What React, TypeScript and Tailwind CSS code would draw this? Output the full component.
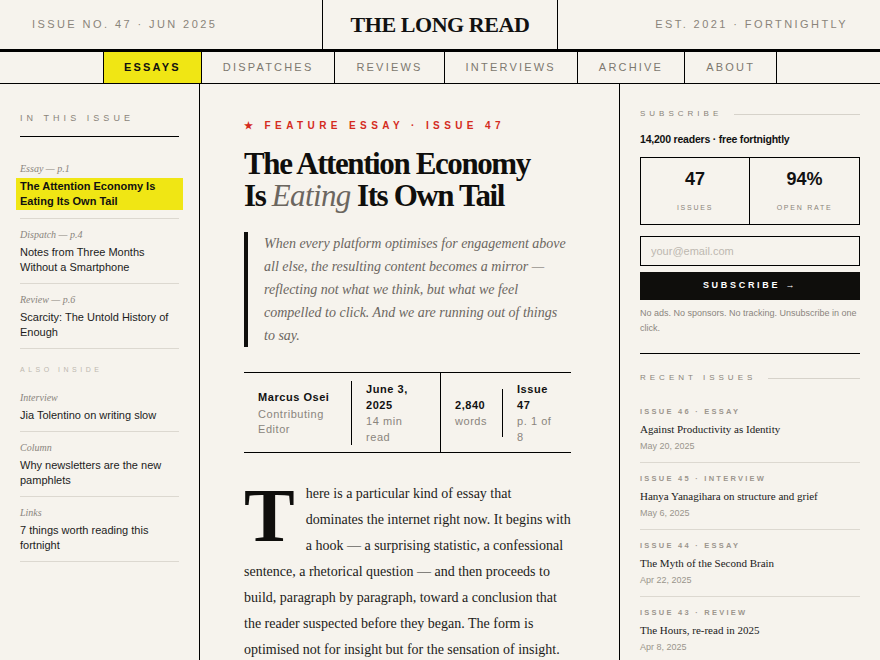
import React from "react";

const sans = { fontFamily: '"Liberation Sans", Arial, sans-serif' };
const serif = { fontFamily: '"Liberation Serif", "Times New Roman", serif' };

function SideItem({ label, title, hl }: { label: string; title: React.ReactNode; hl?: boolean }) {
  return (
    <div className="pt-[10px] pb-[8px] border-b border-[#dcd8d0]">
      <div className="text-[10px] leading-[12px] italic text-[#8a857d]" style={serif}>
        {label}
      </div>
      {hl ? (
        <div className="mt-[3px] -mx-1 px-1 py-px bg-[#f0e614] text-[11px] leading-[15px] font-bold text-[#111]">
          {title}
        </div>
      ) : (
        <div className="mt-[4px] text-[11px] leading-[15px] text-[#1c1c1c]">{title}</div>
      )}
    </div>
  );
}

function RecentItem({ label, title, date }: { label: string; title: string; date: string }) {
  return (
    <div className="pt-[10px] pb-[10px] border-b border-[#dcd8d0]">
      <div className="text-[7.5px] leading-[12px] tracking-[0.3em] font-bold text-[#9c968d]">{label}</div>
      <div className="mt-[4px] text-[11px] leading-[14px] text-[#1a1a1a]" style={serif}>
        {title}
      </div>
      <div className="mt-[4px] text-[9px] leading-[12px] text-[#9a958c]">{date}</div>
    </div>
  );
}

export default function App() {
  const nav = ["ESSAYS", "DISPATCHES", "REVIEWS", "INTERVIEWS", "ARCHIVE", "ABOUT"];
  return (
    <div className="min-h-screen bg-[#f6f3ed] text-[#111]" style={sans}>
      {/* Masthead */}
      <header className="grid grid-cols-[1fr_auto_1fr] h-[52px] border-b-[3px] border-black">
        <div className="flex items-center pl-8 text-[11px] tracking-[0.22em] text-[#8a847a]">
          ISSUE NO. 47 · JUN 2025
        </div>
        <div className="flex items-center justify-center border-x border-black px-[28px]">
          <span className="text-[22px] font-bold tracking-[-0.02em] text-[#111]" style={serif}>
            THE LONG READ
          </span>
        </div>
        <div className="flex items-center justify-end pr-8 text-[11px] tracking-[0.22em] text-[#8a847a]">
          EST. 2021 · FORTNIGHTLY
        </div>
      </header>

      {/* Nav */}
      <nav className="flex justify-center border-b border-black">
        {nav.map((n, i) => (
          <div
            key={n}
            className={
              i === 0
                ? "h-[31px] flex items-center px-5 border-x border-black bg-[#f0e614] text-[11px] tracking-[0.2em] font-bold text-[#111]"
                : "h-[31px] flex items-center px-[21px] border-r border-black text-[11px] tracking-[0.2em] text-[#7d786f]"
            }
          >
            {n}
          </div>
        ))}
      </nav>

      {/* Body */}
      <div className="grid grid-cols-[200px_420px_260px]">
        {/* Left sidebar */}
        <aside className="border-r border-black px-5 pt-[28px]">
          <div className="text-[9px] leading-[12px] tracking-[0.45em] text-[#8a847a] pb-[12px] border-b border-black">
            IN THIS ISSUE
          </div>
          <div className="mt-[16px]">
            <SideItem label="Essay — p.1" hl title={<>The Attention Economy Is<br />Eating Its Own Tail</>} />
            <SideItem label="Dispatch — p.4" title={<>Notes from Three Months<br />Without a Smartphone</>} />
            <SideItem label="Review — p.6" title={<>Scarcity: The Untold History of<br />Enough</>} />
          </div>
          <div className="mt-[15px] text-[7px] leading-[12px] tracking-[0.5em] text-[#bdb8b0]">ALSO INSIDE</div>
          <div className="mt-[6px]">
            <SideItem label="Interview" title="Jia Tolentino on writing slow" />
            <SideItem label="Column" title={<>Why newsletters are the new<br />pamphlets</>} />
            <SideItem label="Links" title={<>7 things worth reading this<br />fortnight</>} />
          </div>
        </aside>

        {/* Center article */}
        <main className="border-r border-black pl-[44px] pr-[48px] pt-[36px] pb-10">
          <div className="text-[10px] leading-[12px] tracking-[0.44em] font-bold text-[#d42b1e]">
            ★ FEATURE ESSAY · ISSUE 47
          </div>
          <h1 className="mt-4 text-[31px] leading-[32px] font-bold tracking-[-0.045em] text-[#0f0e0c]" style={serif}>
            The Attention Economy
            <br />
            Is <em className="font-normal tracking-[-0.02em] text-[#6b665f]">Eating</em> Its Own Tail
          </h1>
          <blockquote
            className="mt-5 border-l-4 border-[#0f0e0c] pl-4 text-[14px] leading-[23px] italic text-[#6b665f]"
            style={serif}
          >
            When every platform optimises for engagement above all else, the resulting content becomes a mirror —
            reflecting not what we think, but what we feel compelled to click. And we are running out of things to
            say.
          </blockquote>

          {/* Byline */}
          <div className="mt-[25px] flex border-y border-black h-[81px] text-[11px] leading-[16px] tracking-[0.05em]">
            <div className="w-[107px] pl-[14px] flex flex-col justify-center">
              <div className="font-bold text-[#111] mb-[2px]">Marcus Osei</div>
              <div className="text-[#8a857d] leading-[15px]">Contributing</div>
              <div className="text-[#8a857d] leading-[15px]">Editor</div>
            </div>
            <div className="self-center h-[64px] w-px bg-black" />
            <div className="w-[88px] pl-[14px] flex flex-col justify-center">
              <div className="font-bold text-[#111]">June 3,</div>
              <div className="font-bold text-[#111]">2025</div>
              <div className="text-[#8a857d]">14 min</div>
              <div className="text-[#8a857d]">read</div>
            </div>
            <div className="w-px bg-black" />
            <div className="w-[61px] pl-[14px] flex flex-col justify-center">
              <div className="font-bold text-[#111]">2,840</div>
              <div className="text-[#8a857d]">words</div>
            </div>
            <div className="self-center h-[48px] w-px bg-black" />
            <div className="flex-1 pl-[14px] flex flex-col justify-center">
              <div className="font-bold text-[#111]">Issue</div>
              <div className="font-bold text-[#111]">47</div>
              <div className="text-[#8a857d]">p. 1 of</div>
              <div className="text-[#8a857d]">8</div>
            </div>
          </div>

          {/* Body text */}
          <p className="mt-[28px] text-[14px] leading-[26px] text-[#1c1b19]" style={serif}>
            <span className="float-left mt-[2px] mr-[11px] text-[76px] leading-[64px] font-bold text-[#0f0e0c]">T</span>
            here is a particular kind of essay that dominates the internet right now. It begins with a hook — a
            surprising statistic, a confessional sentence, a rhetorical question — and then proceeds to build,
            paragraph by paragraph, toward a conclusion that the reader suspected before they began. The form is
            optimised not for insight but for the sensation of insight. It flatters rather than unsettles, and it is
            shared because it confirms.
          </p>
        </main>

        {/* Right sidebar */}
        <aside className="px-5 pt-[24px]">
          <div className="flex items-center gap-3">
            <span className="text-[8px] leading-[12px] tracking-[0.5em] text-[#8a847a]">SUBSCRIBE</span>
            <span className="flex-1 h-px bg-[#d6d2ca]" />
          </div>
          <div className="mt-[12px] text-[10.5px] leading-[14px] font-bold tracking-[-0.02em] text-[#111]">
            14,200 readers · free fortnightly
          </div>
          <div className="mt-[11px] grid grid-cols-2 border border-black">
            <div className="border-r border-black pt-[10px] pb-[10px] flex flex-col items-center">
              <div className="text-[18px] leading-[22px] font-bold text-[#111]">47</div>
              <div className="mt-[12px] text-[7px] leading-[12px] tracking-[0.25em] text-[#8a847a]">ISSUES</div>
            </div>
            <div className="pt-[10px] pb-[10px] flex flex-col items-center">
              <div className="text-[18px] leading-[22px] font-bold text-[#111]">94%</div>
              <div className="mt-[12px] text-[7px] leading-[12px] tracking-[0.25em] text-[#8a847a]">OPEN RATE</div>
            </div>
          </div>
          <input
            type="email"
            placeholder="your@email.com"
            className="mt-[11px] block w-full h-[30px] border border-black bg-transparent px-[10px] text-[11px] outline-none placeholder:text-[#bdb8b0]"
            style={sans}
          />
          <button className="mt-[6px] w-full h-[28px] bg-[#0f0e0c] text-white text-[9px] font-bold tracking-[0.3em]">
            SUBSCRIBE →
          </button>
          <p className="mt-[6px] text-[9px] leading-[15px] text-[#8a857d]">
            No ads. No sponsors. No tracking. Unsubscribe in one click.
          </p>
          <div className="mt-[17px] h-px bg-black" />
          <div className="mt-[18px] flex items-center gap-3">
            <span className="text-[8px] leading-[12px] tracking-[0.5em] text-[#8a847a]">RECENT ISSUES</span>
            <span className="flex-1 h-px bg-[#d6d2ca]" />
          </div>
          <div className="mt-[12px]">
            <RecentItem label="ISSUE 46 · ESSAY" title="Against Productivity as Identity" date="May 20, 2025" />
            <RecentItem label="ISSUE 45 · INTERVIEW" title="Hanya Yanagihara on structure and grief" date="May 6, 2025" />
            <RecentItem label="ISSUE 44 · ESSAY" title="The Myth of the Second Brain" date="Apr 22, 2025" />
            <RecentItem label="ISSUE 43 · REVIEW" title="The Hours, re-read in 2025" date="Apr 8, 2025" />
          </div>
        </aside>
      </div>
    </div>
  );
}
